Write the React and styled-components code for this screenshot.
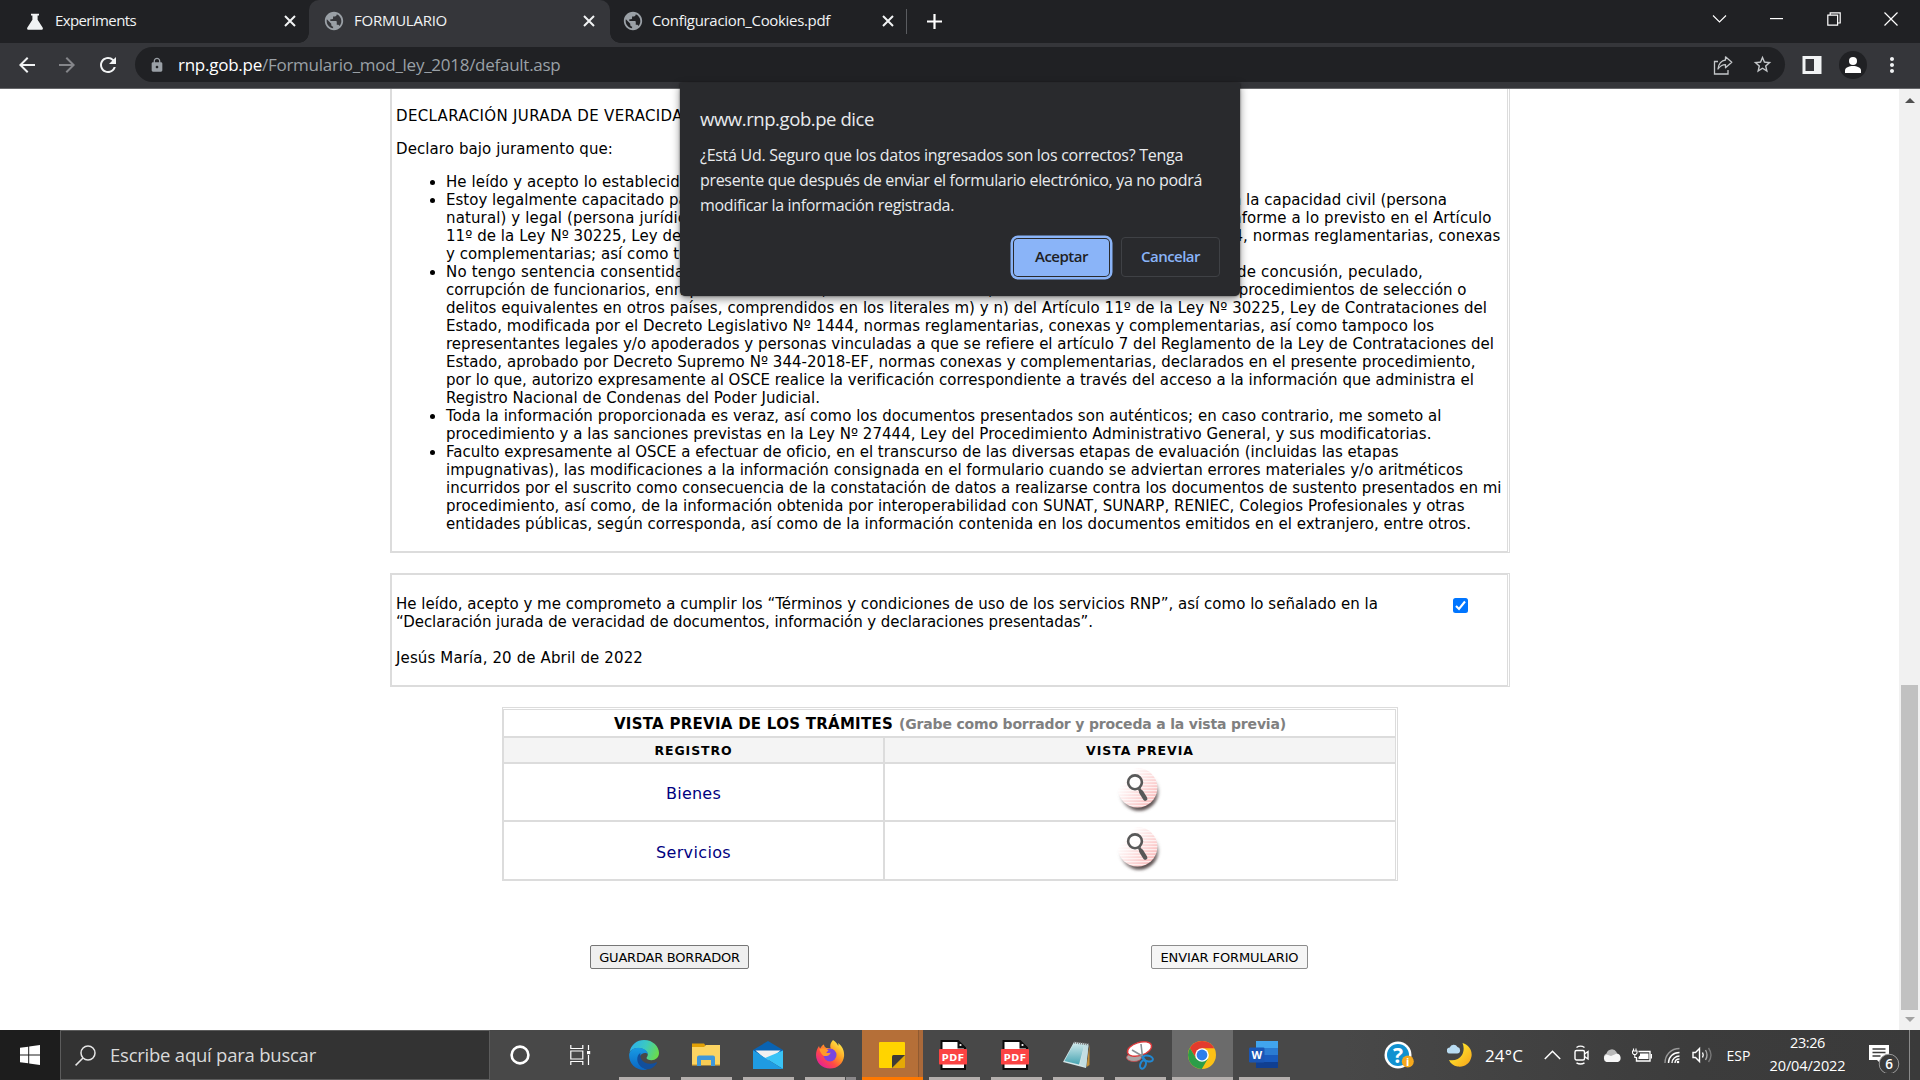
import React, { useLayoutEffect, useRef, useState } from "react";
import styled, { createGlobalStyle, css } from "styled-components";
import {
  MdArrowBack,
  MdArrowForward,
  MdLock,
  MdMoreVert,
  MdPublic,
  MdRefresh,
  MdStarBorder,
} from "react-icons/md";

const UI = `"Segoe UI", "Open Sans", "Noto Sans", sans-serif`;
const DOC = `Verdana, "DejaVu Sans", sans-serif`;
const LINE = "#dcdcdc";

const GlobalStyle = createGlobalStyle`
  * { box-sizing: border-box; }
  body { margin: 0; overflow: hidden; background: #fff; }
  svg { display: block; flex: none; }
`;

/* ---------- text set to an exact measure ---------- */

const Measured = styled.span`
  display: inline-block;
  white-space: pre;
`;

function Fit({ w, children }) {
  const ref = useRef(null);
  const [spacing, setSpacing] = useState(0);
  useLayoutEffect(() => {
    const el = ref.current;
    el.style.letterSpacing = "0px";
    const natural = el.getBoundingClientRect().width;
    setSpacing((w - natural) / el.textContent.length);
  }, [w, children]);
  return (
    <Measured ref={ref} style={{ letterSpacing: `${spacing}px` }}>
      {children}
    </Measured>
  );
}

/* ---------- frame ---------- */

const Screen = styled.div`
  position: relative;
  display: flex;
  flex-direction: column;
  width: 1920px;
  height: 1080px;
  overflow: hidden;
  font-family: ${UI};
`;

const TabStrip = styled.header`
  display: flex;
  height: 43px;
  flex: none;
  background: #202124;
  color: #fff;
`;

const Tab = styled.div`
  position: relative;
  display: flex;
  align-items: center;
  width: ${(p) => p.$w}px;
  padding: 0 ${(p) => p.$right}px 1px ${(p) => p.$left}px;
  gap: ${(p) => p.$gap || 10}px;
  font-size: 15px;
  color: #f1f3f4;
  & > span {
    padding-bottom: 2px;
  }
  ${(p) =>
    p.$active &&
    css`
      background: #35363a;
      border-radius: 10px 10px 0 0;
      &::before,
      &::after {
        content: "";
        position: absolute;
        bottom: 0;
        width: 10px;
        height: 10px;
      }
      &::before {
        left: -10px;
        background: radial-gradient(circle at 0 0, transparent 9.5px, #35363a 10px);
      }
      &::after {
        right: -10px;
        background: radial-gradient(circle at 100% 0, transparent 9.5px, #35363a 10px);
      }
    `}
  & > :last-child {
    margin-left: auto;
  }
`;

const TabDivider = styled.i`
  width: 1px;
  height: 25px;
  margin-top: 9px;
  background: #5a5c60;
`;

const NewTab = styled.div`
  display: flex;
  align-items: center;
  padding: 0 0 1px 20px;
`;

const WindowButtons = styled.div`
  display: flex;
  margin-left: auto;
  padding-bottom: 6px;
  & > * {
    display: flex;
    align-items: center;
    justify-content: center;
    width: 57.4px;
  }
`;

const Toolbar = styled.div`
  display: flex;
  align-items: center;
  height: 46px;
  flex: none;
  padding-left: 15px;
  background: #35363a;
  border-bottom: 1px solid #66676a;
  color: #f1f3f4;
`;

const NavButton = styled.span`
  display: flex;
  justify-content: center;
  width: 40px;
  margin-right: ${(p) => p.$mr || 0}px;
  margin-left: ${(p) => p.$ml || 0}px;
  padding-bottom: 1px;
  color: ${(p) => (p.$dim ? "#85868a" : "#f1f3f4")};
  & > svg { width: 24px; height: 24px; }
`;

const Omnibox = styled.div`
  display: flex;
  align-items: center;
  width: 1650px;
  height: 35px;
  margin-top: -3px;
  padding: 0 12px 0 14px;
  border-radius: 18px;
  background: #202124;
  font-size: 17px;
  color: #9aa0a6;
  & > svg { margin-top: 1px; }
  & b { font-weight: 400; color: #fff; }
`;

const Url = styled.span`
  display: flex;
  margin-left: 13px;
`;

const OmniActions = styled.span`
  display: flex;
  align-items: center;
  gap: 19px;
  margin-left: auto;
  padding-top: 1px;
  color: #c4c7ca;
`;

const Viewport = styled.div`
  display: flex;
  flex: 1;
  min-height: 0;
  background: #fff;
`;

/* ---------- form page ---------- */

const Page = styled.main`
  flex: 1;
  padding-left: 390px;
  font-family: ${DOC};
  font-size: 15px;
  line-height: 18px;
  color: #000;
`;

const Panel = styled.section`
  width: 1120px;
  border: 2px solid ${LINE};
  border-right: 3px double ${LINE};
  padding-left: 4px;
`;

const Declaration = styled(Panel)`
  height: 464px;
  padding-top: 18px;
  border-top: 0;
  & p { margin: 0 0 15px; height: 18px; }
  & ul { margin: 0; padding-left: 50px; }
`;

const Row = styled.span`
  display: block;
  height: 18px;
  white-space: nowrap;
`;

const Terms = styled(Panel)`
  display: flex;
  height: 114px;
  margin-top: 20px;
  padding-top: 20px;
`;

const TermsText = styled.div`
  width: 1057px;
`;

const Check = styled.span`
  display: flex;
  align-items: center;
  justify-content: center;
  width: 15px;
  height: 15px;
  margin-top: 3px;
  border-radius: 2.5px;
  background: #0075ff;
`;

const Preview = styled.section`
  width: 896px;
  margin: 20px 0 0 112px;
  border: 2px solid ${LINE};
  border-top: 3px double ${LINE};
  border-right: 3px double ${LINE};
`;

const PreviewTitle = styled.h2`
  display: flex;
  align-items: center;
  height: 28px;
  margin: 0;
  padding: 2px 0 0 110px;
  border-bottom: 2px solid ${LINE};
  font-size: 15px;
  gap: 6px;
  & small { font-size: 14px; color: #808080; }
`;

const PreviewRow = styled.div`
  display: flex;
  height: ${(p) => p.$h}px;
  ${(p) => !p.$last && `border-bottom: 2px solid ${LINE};`}
  ${(p) =>
    p.$head &&
    css`
      background: #f4f4f4;
      font-size: 12.5px;
      font-weight: 700;
    `}
`;

const Cell = styled.div`
  display: flex;
  align-items: center;
  justify-content: center;
  width: ${(p) => (p.$first ? 381 : 510)}px;
  padding-top: ${(p) => p.$drop || 0}px;
  padding-bottom: ${(p) => p.$lift || 0}px;
  padding-right: ${(p) => p.$lift / 2 || 0}px;
  ${(p) => p.$first && `border-right: 2px solid ${LINE};`}
  ${(p) => p.$link && "color: #000080; font-size: 16px;"}
`;

const Actions = styled.div`
  display: flex;
  gap: 402px;
  margin: 64px 0 0 200px;
`;

const FormButton = styled.button`
  width: ${(p) => p.$w}px;
  height: 24px;
  padding: 0;
  border: 1px solid ${(p) => (p.$hover ? "#8c8c8c" : "#767676")};
  border-radius: 2px;
  background: ${(p) => (p.$hover ? "#f5f5f5" : "#efefef")};
  font: 13px ${DOC};
  color: #000;
`;

const Scrollbar = styled.aside`
  display: flex;
  flex-direction: column;
  align-items: center;
  width: 21px;
  background: #f1f1f1;
`;

const Thumb = styled.div`
  width: 17px;
  height: 325px;
  margin-top: auto;
  background: #c1c1c1;
`;

const ScrollArrow = styled.i`
  width: 0;
  height: 0;
  border: 5px solid transparent;
  ${(p) =>
    p.$up
      ? "border-top: 0; border-bottom-color: #505050; margin-top: 9px;"
      : "border-bottom: 0; border-top-color: #a3a3a3; margin: 7px 0 8px;"}
`;

/* ---------- dialog ---------- */

const Dialog = styled.div`
  position: absolute;
  left: 680px;
  top: 83px;
  width: 560px;
  height: 213px;
  padding: 23px 20px 0;
  background: #292a2d;
  border-radius: 0 0 5px 5px;
  box-shadow: 0 3px 8px rgba(0, 0, 0, 0.45), 0 0 2px rgba(0, 0, 0, 0.6);
  color: #e8eaed;
  font-size: 16px;
  line-height: 25px;
`;

const DialogTitle = styled.h1`
  margin: 0 0 12px;
  font-size: 18.5px;
  font-weight: 400;
  line-height: 25px;
`;

const DialogLine = styled.div`
  height: 25px;
`;

const DialogActions = styled.div`
  display: flex;
  justify-content: flex-end;
  align-items: center;
  gap: 12px;
  margin-top: 19px;
  height: 40px;
`;

const DialogButton = styled.button`
  display: flex;
  align-items: center;
  justify-content: center;
  width: ${(p) => (p.$primary ? 95 : 99)}px;
  height: ${(p) => (p.$primary ? 37 : 40)}px;
  padding: 0 0 2px;
  border: ${(p) => (p.$primary ? "0" : "1px solid #3f4145")};
  border-radius: 4px;
  background: ${(p) => (p.$primary ? "#8ab4f8" : "transparent")};
  color: ${(p) => (p.$primary ? "#202124" : "#8ab4f8")};
  font: 600 15px ${UI};
  ${(p) =>
    p.$primary &&
    "box-shadow: 0 0 0 1px #292a2d, 0 0 0 3.5px #8ab4f8;"}
`;

/* ---------- taskbar ---------- */

const Taskbar = styled.footer`
  display: flex;
  height: 50px;
  flex: none;
  background: linear-gradient(90deg, #484848 0, #484848 70%, #3c3c3c 88%, #3a3a3a 100%);
  color: #fff;
`;

const Start = styled.div`
  display: flex;
  align-items: center;
  justify-content: center;
  width: 60px;
  background: #1d1d1d;
`;

const Search = styled.div`
  display: flex;
  align-items: center;
  gap: 14px;
  width: 430px;
  padding-left: 14px;
  background: #333;
  border: 1px solid #5c5c5c;
  font-size: 18.5px;
  color: #dadada;
  & > span { padding-bottom: 2px; }
`;

const Slot = styled.div`
  display: flex;
  align-items: center;
  justify-content: center;
  width: ${(p) => p.$w}px;
  margin-left: ${(p) => p.$ml || 0}px;
  font-size: 14px;
`;

const TaskButton = styled.div`
  display: flex;
  flex-direction: column;
  align-items: center;
  justify-content: space-between;
  width: 61px;
  margin-right: 1px;
  padding-top: 10px;
  background: ${(p) => p.$bg || "transparent"};
  & > svg { margin-right: ${(p) => p.$nudge || 0}px; }
`;

const Running = styled.i`
  width: ${(p) => p.$w || 51}px;
  height: 3px;
  background: ${(p) => p.$color || "#b4afad"};
`;

const RunningPair = styled.span`
  display: flex;
  gap: 1px;
`;

const Weather = styled.div`
  display: flex;
  align-items: center;
  width: 78px;
  margin-left: 28px;
  gap: 13px;
  font-size: 17px;
`;

const Clock = styled.div`
  display: flex;
  flex-direction: column;
  align-items: center;
  width: 87px;
  margin-left: 10px;
  padding-top: 1px;
  font-size: 14.5px;
  line-height: 23px;
`;

const ShowDesktop = styled.i`
  width: 6px;
  margin-left: 8px;
  border-left: 1px solid #8a8a8a;
`;

/* ---------- drawings ---------- */

const Flask = () => (
  <svg width="16" height="17" viewBox="0 0 16 17">
    <path d="M4 .8h8v1.8H4zM5.4 2.2h5.2v4.6l5 7.6c.7 1.2.1 2.4-1.2 2.4H1.6C.3 16.8-.3 15.6.4 14.4l5-7.6z" fill="#f1f3f4" />
  </svg>
);

const CloseX = () => (
  <svg width="18" height="18" viewBox="0 0 18 18" stroke="#f1f3f4" strokeWidth="2">
    <path d="M4 4l10 10M14 4L4 14" />
  </svg>
);

const Plus = () => (
  <svg width="15" height="15" viewBox="0 0 15 15" stroke="#fff" strokeWidth="2.200">
    <path d="M7.500 0v15M0 7.500h15" />
  </svg>
);

const ShareIcon = () => (
  <svg width="20" height="20" viewBox="0 0 20 20" fill="none" stroke="currentColor" strokeWidth="1.3">
    <path d="M5 6.5H1.5V19H15v-4" />
    <path d="M12.5 1.8 18.8 7.3l-6.3 5.500V9.600C9 9.600 7 11 5 14c.5-5 3.500-8.600 7.500-9z" strokeLinejoin="round" />
  </svg>
);

const Chevron = ({ up }) => (
  <svg width="17" height="10" viewBox="0 0 17 10" fill="none" stroke="#fff" strokeWidth={up ? 1.5 : 1.1}>
    <path d={up ? "M.8 9 8.5 1.2 16.2 9" : "M2 1.5l6.500 6.500L15 1.500"} />
  </svg>
);

const LensButton = ({ id }) => (
  <svg width="48" height="48" viewBox="0 0 48 48">
    <defs>
      <linearGradient id={`${id}g`} x1="0" y1="0" x2="1" y2=".8">
        <stop offset=".25" stopColor="#fff" />
        <stop offset="1" stopColor="#f9b9b9" />
      </linearGradient>
      <pattern id={`${id}p`} width="4" height="3" patternUnits="userSpaceOnUse">
        <rect width="4" height="1.2" fill="#fff" opacity=".65" />
      </pattern>
      <filter id={`${id}f`} x="-30%" y="-30%" width="160%" height="160%">
        <feGaussianBlur stdDeviation="1.7" />
      </filter>
      <linearGradient id={`${id}s`} x1="0.3" y1="0.1" x2=".6" y2=".9">
        <stop offset=".3" stopColor="#776a6a" stopOpacity="0" />
        <stop offset="1" stopColor="#5c5050" />
      </linearGradient>
    </defs>
    <circle cx="24" cy="25" r="19.800" fill={`url(#${id}s)`} filter={`url(#${id}f)`} />
    <circle cx="22.500" cy="21.700" r="19.800" fill={`url(#${id}g)`} />
    <circle cx="22.500" cy="21.700" r="19.800" fill={`url(#${id}p)`} />
    <circle cx="20" cy="16.300" r="6.900" fill="#fff" fillOpacity=".8" stroke="#585858" strokeWidth="2.600" />
    <path d="M24.200 22.800l2 3.500" stroke="#585858" strokeWidth="3" />
    <path d="M26.200 26.200l4 6.500" stroke="#585858" strokeWidth="4.400" strokeLinecap="round" />
  </svg>
);

const EdgeIcon = () => (
  <svg width="30" height="30" viewBox="0 0 30 30">
    <defs>
      <linearGradient id="eg" x1="0" y1=".3" x2="1" y2=".6">
        <stop offset="0" stopColor="#2bb1ee" />
        <stop offset=".5" stopColor="#3cc9c0" />
        <stop offset="1" stopColor="#6bdc4a" />
      </linearGradient>
      <linearGradient id="eb" x1="0" y1="0" x2="0" y2="1">
        <stop offset="0" stopColor="#189be4" />
        <stop offset="1" stopColor="#0a66c4" />
      </linearGradient>
    </defs>
    <path d="M.6 12C2 4.5 8 0 15 0c9 0 15 6.500 15 13 0 4.500-3.500 7.200-7.500 7.200-3 0-5-1-5-2.200 0-.9 1.300-1.400 1.300-3.600C18.800 11 14 8 9.500 8 5 8 2 10 .6 12z" fill="url(#eg)" />
    <path d="M.1 15C.3 10.500 4.500 7.700 9.300 7.700c5.300 0 9.500 3.200 9.500 6.500-1.200-1.700-6.600-2-8 2.800-1.300 5 1.500 10.500 7.400 12.600-1 .3-2 .4-3.200.4C6.500 30 0 23.500.1 15z" fill="url(#eb)" />
    <path d="M11.400 13c-3.300 2-4.200 7-1.800 11 2.600 4.600 8.400 6.600 13 4.200 2.300-1.200 4-3 5.200-5 .4-.8-.1-1.200-.8-.8-6 2.900-12.600.8-14.800-3.400-1-2-1-4.200-.8-6z" fill="#124f9c" />
  </svg>
);

const FolderIcon = () => (
  <svg width="28" height="30" viewBox="0 0 28 30">
    <path d="M0 3.500h12l1.500 2-1.500 3H0z" fill="#e2a005" />
    <path d="M0 7h12l2-2h14v20H0z" fill="#fcd462" />
    <path d="M0 24h28v1.500H0z" fill="#eab63c" />
    <path d="M5 26V17.500Q5 15.500 7 15.500h14q2 0 2 2V26h-4v-6H9v6z" fill="#3f97da" />
    <path d="M9 20h10v5H9z" fill="#f8cc55" />
  </svg>
);

const MailIcon = () => (
  <svg width="30" height="30" viewBox="0 0 30 30">
    <path d="M0 10 15 1l15 9v6H0z" fill="#0963b3" />
    <path d="M2.500 10.500h25L15 21z" fill="#f1f1f1" />
    <path d="M0 10.500 15 20 0 29z" fill="#33b6f0" />
    <path d="M30 10.500V29L12 18z" fill="#39c3f6" />
    <path d="M0 10.500 30 29H0z" fill="#1f9be2" />
  </svg>
);

const FirefoxIcon = () => (
  <svg width="30" height="30" viewBox="0 0 30 30">
    <defs>
      <linearGradient id="fx" x1=".9" y1=".1" x2=".2" y2=".9">
        <stop offset="0" stopColor="#fff04a" />
        <stop offset=".4" stopColor="#ff9d22" />
        <stop offset=".7" stopColor="#ff4a45" />
        <stop offset="1" stopColor="#e9238f" />
      </linearGradient>
    </defs>
    <path d="M18 0c3 2 4.500 4 5.200 6 .4-1 .3-2-.1-3 4 3 6.400 7.400 6 13-.6 7.200-6.600 12.600-14 12.600C7.200 28.600 1 22.600 1 15c0-3.600 1.200-6.600 3-9 .2 1.200.6 2 1.200 2.600C6 6.500 7.600 5 9 4.500c0 1.600.8 2.800 2.400 3.400 1.600-.1 3 .1 4.200.7C14.600 5.500 15.600 2.300 18 0z" fill="url(#fx)" />
    <circle cx="15" cy="15" r="6.500" fill="#7a45e0" />
    <path d="M4.500 9c3-1.500 6.500-1 9 1.500l-2.300 2c1.500 1 3.400.6 4.500 0-1 3-3.200 3.500-6 3.500C8.500 16.500 5 13 4.500 9z" fill="#ff9a2a" />
  </svg>
);

const StickyIcon = () => (
  <svg width="26" height="30" viewBox="0 0 26 30">
    <path d="M0 3q0-1 1-1h24q1 0 1 1v12L13.500 28H1q-1 0-1-1z" fill="#ffd400" />
    <path d="M13.500 28 26 15v12q0 1-1 1z" fill="#e5a906" />
    <path d="M13 28V16.500q0-1.500 1.500-1.500H26z" fill="#3e3b36" />
  </svg>
);

const PdfIcon = () => (
  <svg width="28" height="30" viewBox="0 0 28 30">
    <path d="M2.500 1H19l7 7v21H2.500z" fill="#fff" stroke="#0a0a0a" strokeWidth="2" />
    <path d="M18.500 0 27 8.500h-8.500z" fill="#111" />
    <circle cx="21.500" cy="5" r="1.100" fill="#fff" />
    <rect y="9" width="28" height="15.500" rx=".8" fill="#fb4343" />
    <text x="14.200" y="20.600" textAnchor="middle" letterSpacing=".6" fontFamily="DejaVu Sans" fontWeight="700" fontSize="9.500" fill="#fff">PDF</text>
  </svg>
);

const NotepadIcon = () => (
  <svg width="30" height="30" viewBox="0 0 30 30">
    <defs>
      <linearGradient id="np" x1="0" y1="0" x2="0" y2="1">
        <stop offset="0" stopColor="#cfe9ec" />
        <stop offset="1" stopColor="#47a4b2" />
      </linearGradient>
    </defs>
    <path d="M26.500 4.500V25l-3 2z" fill="#c4913a" />
    <path d="M11 2 25.500 4 23 28 0 22z" fill="#d5e6e8" />
    <path d="M11 3 21.500 4.300 16 24.500 1.500 21z" fill="url(#np)" />
    <path d="M21.500 4 17 24.500l6 3L25.500 5z" fill="#c3dee2" />
    <path d="M11 2.500 26 4.500" stroke="#777" strokeWidth="2.200" strokeDasharray="1 1" />
  </svg>
);

const SnipIcon = () => (
  <svg width="30" height="30" viewBox="0 0 30 30">
    <ellipse cx="9" cy="17.500" rx="7.500" ry="4" fill="#a9a5a5" stroke="#c8484a" strokeWidth=".8" />
    <ellipse cx="14.500" cy="9" rx="12.500" ry="6.500" transform="rotate(-18 14.500 9)" fill="#fff" stroke="#dd3a3c" strokeWidth="1.400" />
    <path d="M16 4l1.500 13M7 10l12 7" stroke="#8a8f94" strokeWidth="1.600" />
    <ellipse cx="23" cy="18.500" rx="5" ry="2.800" transform="rotate(14 23 18.500)" fill="none" stroke="#2288d2" strokeWidth="2" />
    <ellipse cx="18" cy="24.500" rx="2.700" ry="4.300" transform="rotate(20 18 24.500)" fill="none" stroke="#2288d2" strokeWidth="2" />
    <path d="M17 16.500l3 4" stroke="#2288d2" strokeWidth="2.500" />
  </svg>
);

const ChromeIcon = () => (
  <svg width="30" height="30" viewBox="0 0 30 30">
    <circle cx="15" cy="15" r="14" fill="#fbc116" />
    <path d="M15 8.200h12.300A14 14 0 0 0 2.900 8l6.300 10.500z" fill="#e33b2e" />
    <path d="M2.900 8A14 14 0 0 0 14.800 29l6.200-10.600L9.200 18.500z" fill="#2b9e48" />
    <circle cx="15" cy="15" r="6.800" fill="#fff" />
    <circle cx="15" cy="15" r="5.400" fill="#2f7de9" />
  </svg>
);

const WordIcon = () => (
  <svg width="30" height="30" viewBox="0 0 30 30">
    <path d="M7 1h22v7H7z" fill="#41a5ee" />
    <path d="M7 8h22v7H7z" fill="#2b7cd3" />
    <path d="M7 15h22v7H7z" fill="#185abd" />
    <path d="M7 22h22v6H7z" fill="#103f91" />
    <rect x="0" y="7.500" width="15.500" height="15" rx="1.200" fill="#1a56b5" />
    <text x="7.700" y="19" textAnchor="middle" fontFamily="Open Sans" fontWeight="700" fontSize="11" fill="#fff">W</text>
  </svg>
);

const HelpIcon = () => (
  <svg width="30" height="30" viewBox="0 0 30 30">
    <circle cx="14" cy="15" r="13.500" fill="#fff" />
    <circle cx="14" cy="15" r="11" fill="#1191d0" />
    <text x="14" y="22.500" textAnchor="middle" fontFamily="Open Sans" fontWeight="700" fontSize="21" fill="#fff">?</text>
    <circle cx="23.800" cy="21.500" r="6" fill="#f5a81c" />
    <text x="23.800" y="25.500" textAnchor="middle" fontFamily="Open Sans" fontWeight="700" fontSize="11" fill="#fff">i</text>
  </svg>
);

const MoonIcon = () => (
  <svg width="25" height="26" viewBox="0 0 25 26">
    <defs>
      <linearGradient id="mn" x1="0" y1="0" x2="1" y2="1">
        <stop offset=".3" stopColor="#ffe12b" />
        <stop offset="1" stopColor="#f7a21b" />
      </linearGradient>
    </defs>
    <path d="M15.500 1C22 3 25.500 8.500 24.500 14.500 23 22 17 25.500 10.500 24.500 6.500 23.800 3.500 21.500 2 18c5 1 10.500-.6 13-5 2-3.800 2.200-8 .5-12z" fill="url(#mn)" />
    <path d="M3 11.500a3 3 0 0 1-.3-6A4.300 4.300 0 0 1 10.500 5a3.300 3.300 0 0 1-.3 6.500z" fill="#b9dcf2" />
  </svg>
);

const line = { fill: "none", stroke: "#fff", strokeWidth: 1.4 };

const MeetIcon = () => (
  <svg width="16" height="20" viewBox="0 0 16 20" {...line}>
    <rect x="1" y="5.500" width="9.500" height="9.500" rx="1.500" />
    <path d="M10.500 9l3.500-2.500v7.500l-3.500-2.500M2.500 2.500C5 .8 8 .8 10.500 2.500M2.500 17.800c2.500 1.600 5.500 1.600 8 0" />
  </svg>
);

const CloudIcon = () => (
  <svg width="20" height="15" viewBox="0 0 20 15">
    <path d="M3 12a4 4 0 0 1 1.500-6.500A5.500 5.500 0 0 1 14.500 4L16 9z" fill="#b9b9b9" />
    <path d="M4.500 14a4 4 0 0 1 0-7.500L9 8l6-2.500A4.500 4.500 0 0 1 16 14z" fill="#f7f7f7" />
  </svg>
);

const BatteryIcon = () => (
  <svg width="20" height="15" viewBox="0 0 20 15">
    <path d="M6.500 3.500H18V13H4.500V9.500" {...line} />
    <path d="M8 5.500h8.500V11H6.500V9L8 7.500zM18.700 6h1.300v4.500h-1.300z" fill="#fff" />
    <path d="M1.500.500v2.500M4 .500v2.500M.500 3h4.500v2L3.800 6.500H1.700L.500 5zM2.800 6.500V9.500H5" {...line} strokeWidth="1.100" />
  </svg>
);

const WifiIcon = () => (
  <svg width="17" height="17" viewBox="0 0 17 17" {...line}>
    <path d="M1 16C1 8 7 1.500 15.500 1.500" stroke="#999" />
    <path d="M4.500 16C4.500 10 9 5.500 15.500 5.500M8 16c0-4 3.500-7 7.500-7" />
    <path d="M11 16c0-2.500 2-4 4.500-4" />
    <circle cx="14" cy="15" r="1.300" fill="#fff" stroke="none" />
  </svg>
);

const SpeakerIcon = () => (
  <svg width="22" height="18" viewBox="0 0 22 18" {...line}>
    <path d="M1 6.500h2.500L7.500 2.500v13L3.500 11.500H1z" />
    <path d="M10.500 6.500q1.500 2.500 0 5" />
    <path d="M13.500 4q3 5 0 10" stroke="#aaa" />
    <path d="M16.500 2q5 7 0 14" stroke="#777" />
  </svg>
);

const NotifyIcon = () => (
  <svg width="32" height="36" viewBox="0 0 32 36">
    <path d="M0 8h20v15H12v4l-4-4H0z" fill="#fff" />
    <path d="M3.500 12h13M3.500 15.500h13M3.500 19h8" stroke="#3c3c3c" strokeWidth="1.300" />
    <circle cx="20" cy="27" r="9.800" fill="#3b3b3b" stroke="#9a9a9a" strokeWidth="1" />
    <text x="20" y="31.800" textAnchor="middle" fontFamily="Open Sans" fontWeight="600" fontSize="13.500" fill="#fff">6</text>
  </svg>
);

/* ---------- content ---------- */

const clauses = [
  [["He leído y acepto lo establecido en la presente declaración jurada.", 508]],
  [
    ["Estoy legalmente capacitado para contratar con el Estado, por lo que declaro contar plenamente hoy con la capacidad civil (persona", 1001],
    ["natural) y legal (persona jurídica), y que no me encuentro impedido para contratar con dicho OSCE, conforme a lo previsto en el Artículo", 1045.5],
    ["11º de la Ley Nº 30225, Ley de Contrataciones del Estado, modificada por el Decreto Legislativo Nº 1444, normas reglamentarias, conexas", 1054.5],
    ["y complementarias; así como tengo solvencia económica.", 438],
  ],
  [
    ["No tengo sentencia consentida o ejecutoriada, en el país o en el extranjero, por la comisión de delitos de concusión, peculado,", 977],
    ["corrupción de funcionarios, enriquecimiento ilícito, tráfico de influencias, delitos cometidos en remates o procedimientos de selección o", 1020.5],
    ["delitos equivalentes en otros países, comprendidos en los literales m) y n) del Artículo 11º de la Ley Nº 30225, Ley de Contrataciones del", 1041],
    ["Estado, modificada por el Decreto Legislativo Nº 1444, normas reglamentarias, conexas y complementarias, así como tampoco los", 988],
    ["representantes legales y/o apoderados y personas vinculadas a que se refiere el artículo 7 del Reglamento de la Ley de Contrataciones del", 1048],
    ["Estado, aprobado por Decreto Supremo Nº 344-2018-EF, normas conexas y complementarias, declarados en el presente procedimiento,", 1029.5],
    ["por lo que, autorizo expresamente al OSCE realice la verificación correspondiente a través del acceso a la información que administra el", 1028],
    ["Registro Nacional de Condenas del Poder Judicial.", 374],
  ],
  [
    ["Toda la información proporcionada es veraz, así como los documentos presentados son auténticos; en caso contrario, me someto al", 995.5],
    ["procedimiento y a las sanciones previstas en la Ley Nº 27444, Ley del Procedimiento Administrativo General, y sus modificatorias.", 985.5],
  ],
  [
    ["Faculto expresamente al OSCE a efectuar de oficio, en el transcurso de las diversas etapas de evaluación (incluidas las etapas", 952.5],
    ["impugnativas), las modificaciones a la información consignada en el formulario cuando se adviertan errores materiales y/o aritméticos", 1017],
    ["incurridos por el suscrito como consecuencia de la constatación de datos a realizarse contra los documentos de sustento presentados en mi", 1055.5],
    ["procedimiento, así como, de la información obtenida por interoperabilidad con SUNAT, SUNARP, RENIEC, Colegios Profesionales y otras", 1018.5],
    ["entidades públicas, según corresponda, así como de la información contenida en los documentos emitidos en el extranjero, entre otros.", 1025],
  ],
];

const taskApps = [
  { icon: <EdgeIcon />, nudge: 1 },
  { icon: <FolderIcon />, nudge: 1 },
  { icon: <MailIcon />, nudge: 1 },
  { icon: <FirefoxIcon />, pair: true, nudge: 2 },
  { icon: <StickyIcon />, bg: "linear-gradient(90deg, #b56f38 56px, #8f5a31 56px, #8f5a31 57px, #a9693a 57px)", bar: "#ff7800", full: true, nudge: 1 },
  { icon: <PdfIcon />, nudge: 3 },
  { icon: <PdfIcon />, nudge: 3 },
  { icon: <NotepadIcon />, nudge: 2 },
  { icon: <SnipIcon />, nudge: 2 },
  { icon: <ChromeIcon />, bg: "#6b6b6b", full: true, nudge: 1 },
  { icon: <WordIcon />, nudge: 2 },
];

function Browser() {
  return (
    <>
      <TabStrip>
        <Tab $w={309} $left={27} $right={10} $gap={12}>
          <Flask />
          <Fit w={81}>Experiments</Fit>
          <CloseX />
        </Tab>
        <Tab $w={301} $left={14} $right={12} $gap={9} $active>
          <MdPublic size={22} color="#9aa0a6" />
          <Fit w={93}>FORMULARIO</Fit>
          <CloseX />
        </Tab>
        <Tab $w={296} $left={12} $right={9} $gap={8}>
          <MdPublic size={22} color="#9aa0a6" />
          <Fit w={178}>Configuracion_Cookies.pdf</Fit>
          <CloseX />
        </Tab>
        <TabDivider />
        <NewTab>
          <Plus />
        </NewTab>
        <WindowButtons>
          <span><Chevron /></span>
          <span>
            <svg width="13" height="13" viewBox="0 0 13 13"><path d="M0 6h13v1.200H0z" fill="#fff" /></svg>
          </span>
          <span>
            <svg width="14" height="14" viewBox="0 0 14 14" fill="none" stroke="#fff" strokeWidth="1.200">
              <path d="M.8 3.200h9.800v10H.8zM3.200 3V.8h10v10.200h-2.400" />
            </svg>
          </span>
          <span>
            <svg width="14" height="14" viewBox="0 0 14 14" stroke="#fff" strokeWidth="1.200">
              <path d="M.5.500l13 13M13.500.500l-13 13" />
            </svg>
          </span>
        </WindowButtons>
      </TabStrip>
      <Toolbar>
        <NavButton $ml={-8}><MdArrowBack /></NavButton>
        <NavButton $dim><MdArrowForward /></NavButton>
        <NavButton $ml={1} $mr={7}><MdRefresh /></NavButton>
        <Omnibox>
          <MdLock size={16} color="#9aa0a6" />
          <Url>
            <b><Fit w={84}>rnp.gob.pe</Fit></b>
            <Fit w={298.5}>/Formulario_mod_ley_2018/default.asp</Fit>
          </Url>
          <OmniActions>
            <ShareIcon />
            <MdStarBorder size={21} />
          </OmniActions>
        </Omnibox>
        <NavButton $ml={7}>
          <svg viewBox="0 0 24 24">
            <path d="M2.500 3h19v18h-19zM5.500 6v12H14V6z" fill="#f1f3f4" fillRule="evenodd" />
          </svg>
        </NavButton>
        <NavButton $ml={1}>
          <svg viewBox="0 0 24 24" overflow="visible">
            <circle cx="12" cy="12" r="14" fill="#202124" />
            <circle cx="12" cy="8" r="4" fill="#fff" />
            <path d="M4 20v-2.500c0-3 4-4.500 8-4.500s8 1.500 8 4.500V20z" fill="#fff" />
          </svg>
        </NavButton>
        <NavButton $ml={-1}><MdMoreVert /></NavButton>
      </Toolbar>
    </>
  );
}

function FormPage() {
  return (
    <Page>
      <Declaration>
        <p><Fit w={443}>DECLARACIÓN JURADA DE VERACIDAD DE DOCUMENTOS</Fit></p>
        <p><Fit w={217}>Declaro bajo juramento que:</Fit></p>
        <ul>
          {clauses.map((rows, i) => (
            <li key={i}>
              {rows.map(([text, w]) => (
                <Row key={text}><Fit w={w}>{text}</Fit></Row>
              ))}
            </li>
          ))}
        </ul>
      </Declaration>
      <Terms>
        <TermsText>
          <Row><Fit w={982}>He leído, acepto y me comprometo a cumplir los “Términos y condiciones de uso de los servicios RNP”, así como lo señalado en la</Fit></Row>
          <Row><Fit w={697}>“Declaración jurada de veracidad de documentos, información y declaraciones presentadas”.</Fit></Row>
          <Row />
          <Row><Fit w={247}>Jesús María, 20 de Abril de 2022</Fit></Row>
        </TermsText>
        <Check>
          <svg width="11" height="11" viewBox="0 0 11 11" fill="none" stroke="#fff" strokeWidth="2.100">
            <path d="M1 6l3 3 6-7.500" />
          </svg>
        </Check>
      </Terms>
      <Preview>
        <PreviewTitle>
          <Fit w={279}>VISTA PREVIA DE LOS TRÁMITES</Fit>
          <small><Fit w={387}>(Grabe como borrador y proceda a la vista previa)</Fit></small>
        </PreviewTitle>
        <PreviewRow $h={26} $head>
          <Cell $first $drop={2}><Fit w={78}>REGISTRO</Fit></Cell>
          <Cell $drop={2}><Fit w={108}>VISTA PREVIA</Fit></Cell>
        </PreviewRow>
        <PreviewRow $h={58}>
          <Cell $first $link $drop={4}><Fit w={55}>Bienes</Fit></Cell>
          <Cell $lift={4}><LensButton id="a" /></Cell>
        </PreviewRow>
        <PreviewRow $h={57} $last>
          <Cell $first $link $drop={4}><Fit w={75}>Servicios</Fit></Cell>
          <Cell $lift={3}><LensButton id="b" /></Cell>
        </PreviewRow>
      </Preview>
      <Actions>
        <FormButton $w={159}><Fit w={140.5}>GUARDAR BORRADOR</Fit></FormButton>
        <FormButton $w={157} $hover><Fit w={138}>ENVIAR FORMULARIO</Fit></FormButton>
      </Actions>
    </Page>
  );
}

function ConfirmDialog() {
  return (
    <Dialog>
      <DialogTitle><Fit w={174}>www.rnp.gob.pe dice</Fit></DialogTitle>
      <DialogLine><Fit w={483}>¿Está Ud. Seguro que los datos ingresados son los correctos? Tenga</Fit></DialogLine>
      <DialogLine><Fit w={502}>presente que después de enviar el formulario electrónico, ya no podrá</Fit></DialogLine>
      <DialogLine><Fit w={254}>modificar la información registrada.</Fit></DialogLine>
      <DialogActions>
        <DialogButton $primary><Fit w={53}>Aceptar</Fit></DialogButton>
        <DialogButton><Fit w={59}>Cancelar</Fit></DialogButton>
      </DialogActions>
    </Dialog>
  );
}

function WindowsTaskbar() {
  return (
    <Taskbar>
      <Start>
        <svg width="20" height="20" viewBox="0 0 20 20" fill="#fff">
          <path d="M0 2.800 8.200 1.700v7.800H0zM9.200 1.500 20 0v9.500H9.200zM0 10.500h8.200v7.800L0 17.200zM9.200 10.500H20V20L9.200 18.500z" />
        </svg>
      </Start>
      <Search>
        <svg width="21" height="21" viewBox="0 0 21 21" fill="none" stroke="#e6e6e6" strokeWidth="1.500">
          <circle cx="13" cy="8" r="7" />
          <path d="M8 13 .6 20.400" />
        </svg>
        <Fit w={206}>Escribe aquí para buscar</Fit>
      </Search>
      <Slot $w={60}>
        <svg width="20" height="20" viewBox="0 0 20 20" fill="none" stroke="#fff" strokeWidth="2.600">
          <circle cx="10" cy="10" r="8.400" />
        </svg>
      </Slot>
      <Slot $w={61}>
        <svg width="21" height="20" viewBox="0 0 21 20" fill="none" stroke="#fff" strokeWidth="1.200">
          <path d="M.8 0v3.500h12V0M.8 6h12v8H.8zM.8 20v-3.500h12V20M18.500 0v5M18.500 10v10" />
          <path d="M17 6h3.200v3.200H17z" fill="#fff" stroke="none" />
        </svg>
      </Slot>
      <Slot $w={3} />
      {taskApps.map((a, i) => (
        <TaskButton key={i} $bg={a.bg} $nudge={a.nudge}>
          {a.icon}
          {a.pair ? (
            <RunningPair>
              <Running $w={40} />
              <Running $w={10} $color="#8b888a" />
            </RunningPair>
          ) : (
            <Running $w={a.full ? 61 : 51} $color={a.bar} />
          )}
        </TaskButton>
      ))}
      <Slot $w={41} $ml={82}><HelpIcon /></Slot>
      <Weather>
        <MoonIcon />
        <Fit w={38}>24°C</Fit>
      </Weather>
      <Slot $w={30} $ml={12}><Chevron up /></Slot>
      <Slot $w={30}><MeetIcon /></Slot>
      <Slot $w={30}><CloudIcon /></Slot>
      <Slot $w={30}><BatteryIcon /></Slot>
      <Slot $w={31}><WifiIcon /></Slot>
      <Slot $w={29}><SpeakerIcon /></Slot>
      <Slot $w={31} $ml={6}><Fit w={24}>ESP</Fit></Slot>
      <Clock>
        <Fit w={35}>23:26</Fit>
        <Fit w={76}>20/04/2022</Fit>
      </Clock>
      <Slot $w={32} $ml={18}><NotifyIcon /></Slot>
      <ShowDesktop />
    </Taskbar>
  );
}

export default function App() {
  return (
    <Screen>
      <GlobalStyle />
      <Browser />
      <Viewport>
        <FormPage />
        <Scrollbar>
          <ScrollArrow $up />
          <Thumb />
          <ScrollArrow />
        </Scrollbar>
      </Viewport>
      <WindowsTaskbar />
      <ConfirmDialog />
    </Screen>
  );
}
